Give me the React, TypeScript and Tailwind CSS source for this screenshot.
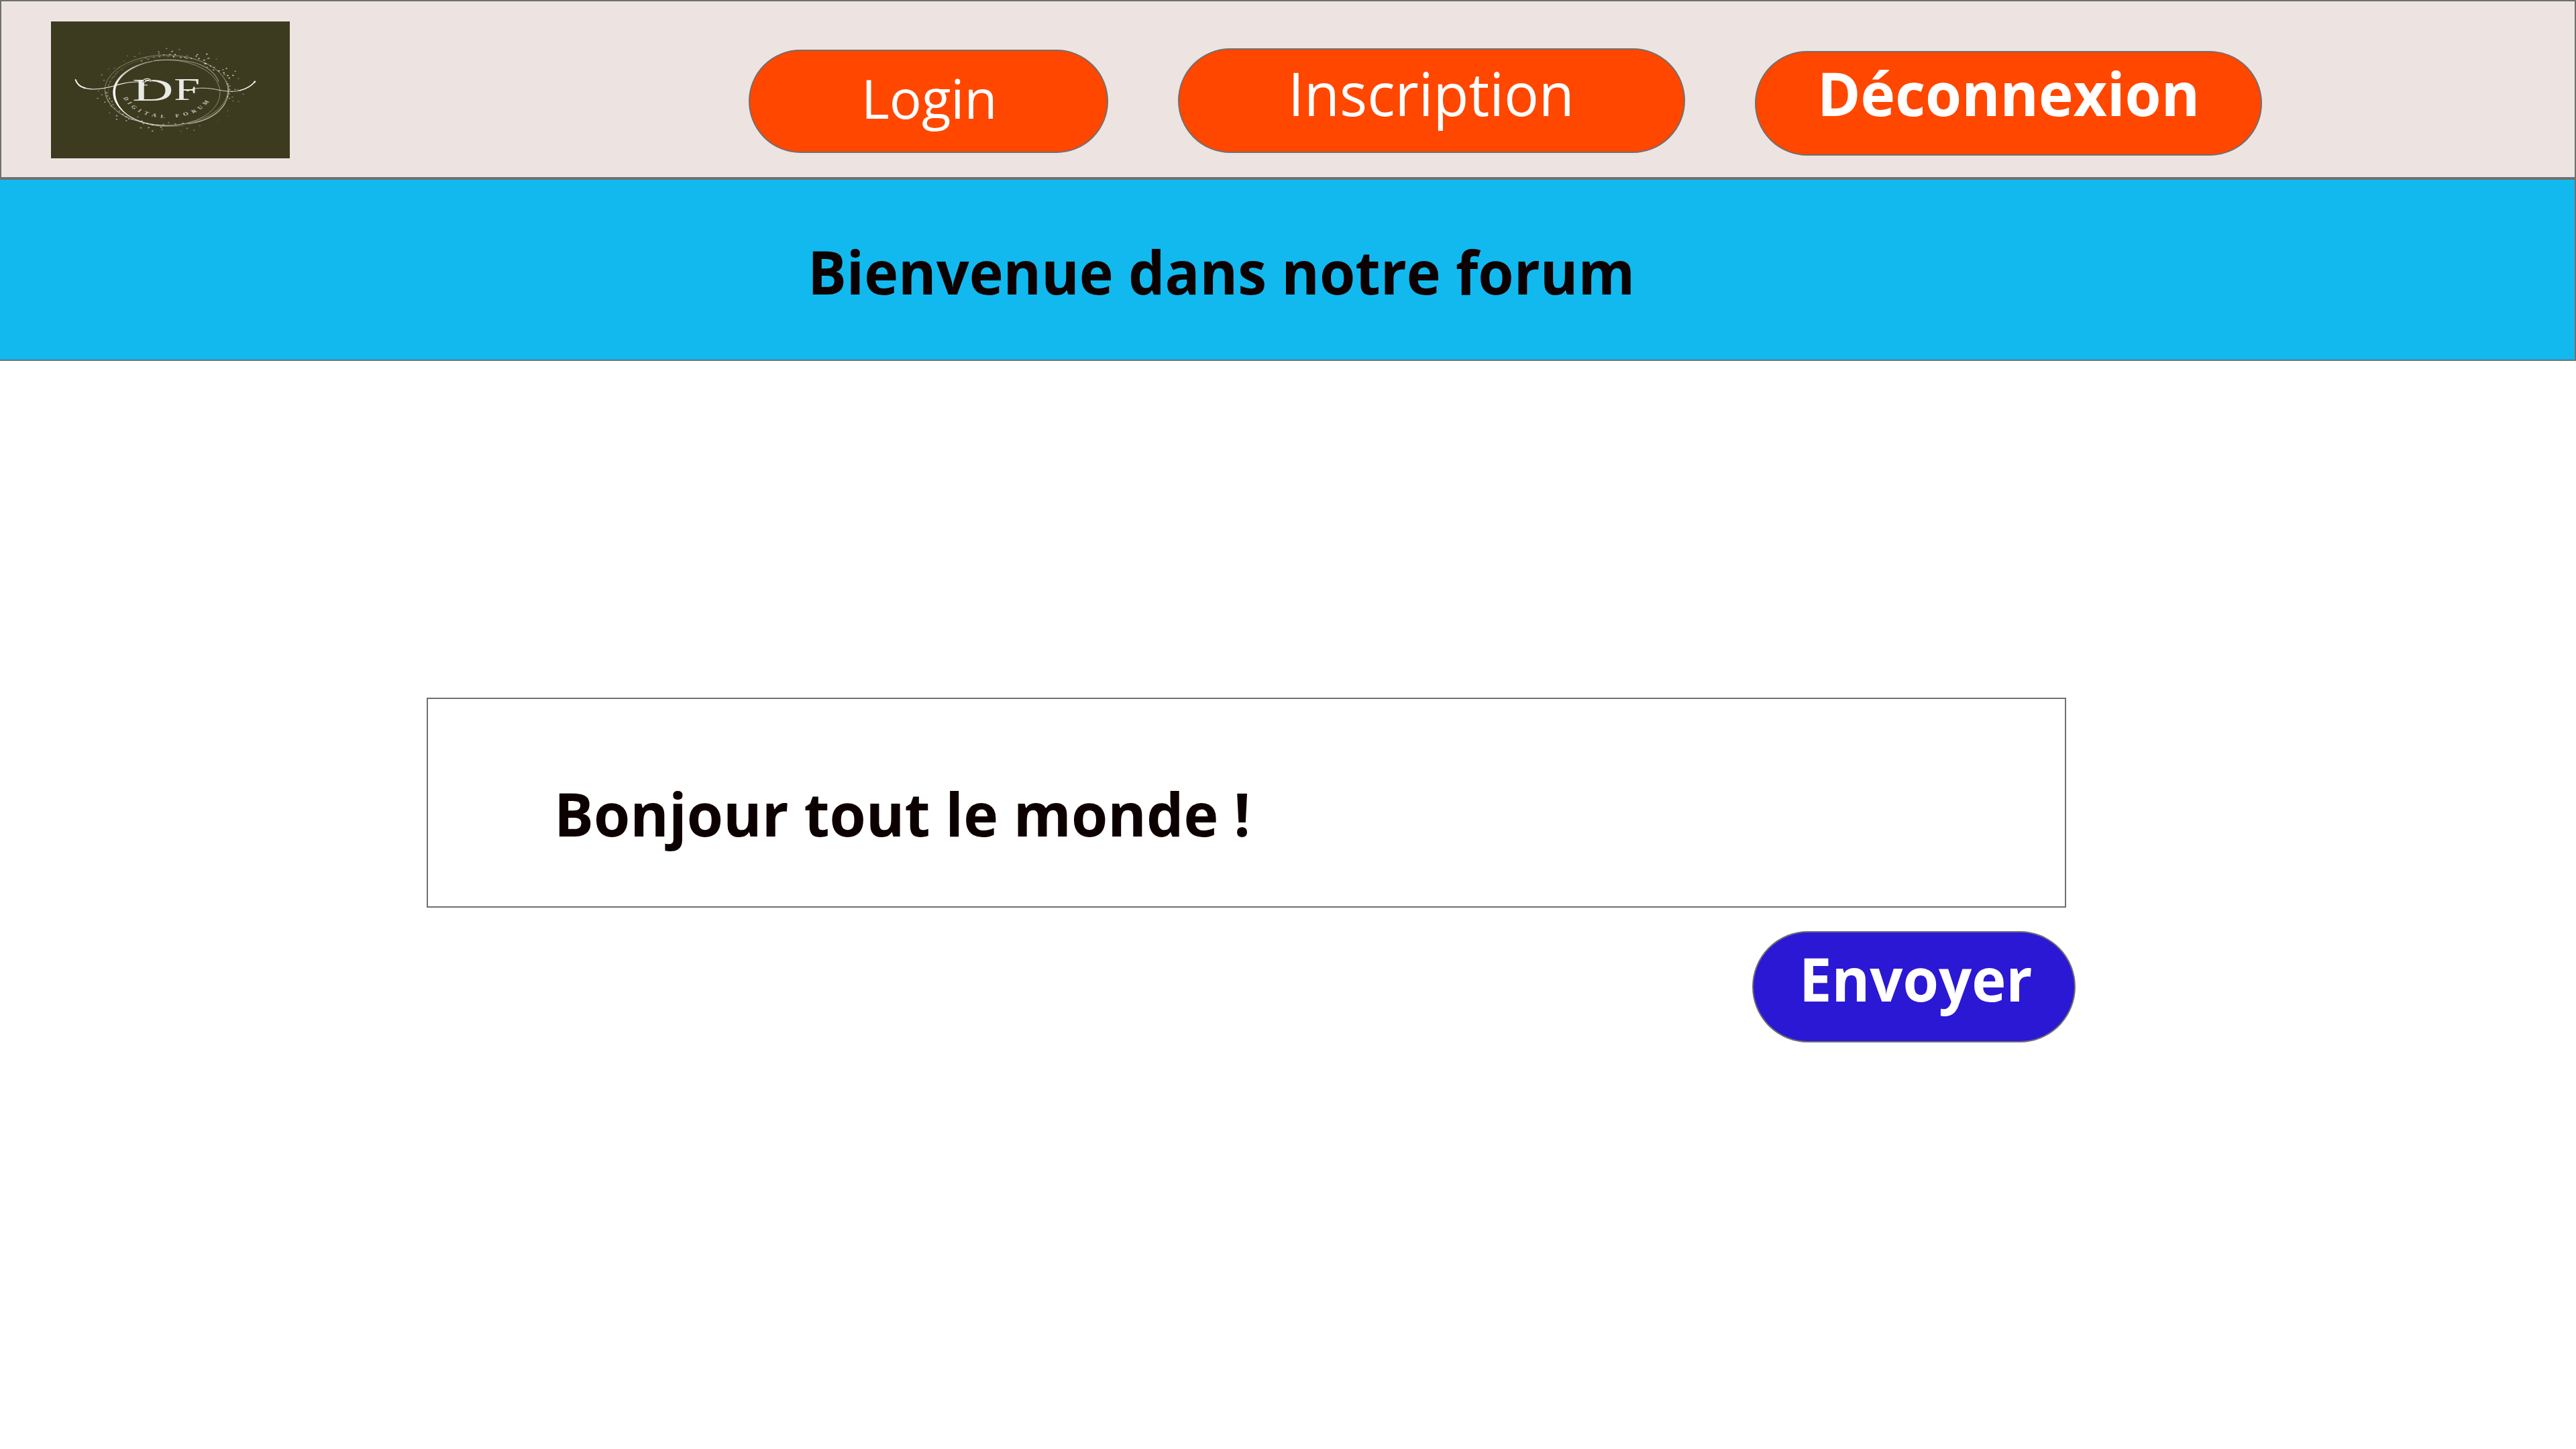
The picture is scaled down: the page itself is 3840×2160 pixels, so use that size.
// [x, y, opacity] of the specks scattered around the rings
const specks: [number, number, number][] = [
  [565, 157, 0.5], [590, 170, 0.8], [622, 161, 0.4], [530, 172, 0.6], [531, 181, 0.5], [553, 185, 0.6],
  [580, 183, 0.8], [603, 184, 0.8], [597, 194, 0.9], [572, 191, 0.4], [533, 194, 0.5], [508, 196, 0.4],
  [483, 205, 0.5], [453, 213, 0.6], [444, 179, 0.25], [422, 193, 0.4], [390, 190, 0.25], [472, 199, 0.35],
  [375, 214, 0.2], [628, 197, 0.7], [647, 197, 0.6], [657, 190, 0.4], [655, 202, 0.5], [675, 201, 0.7],
  [698, 191, 0.8], [703, 184, 0.8], [710, 202, 0.9], [733, 209, 0.9], [745, 182, 0.9], [750, 202, 0.6],
  [755, 200, 0.5], [788, 204, 0.3], [737, 224, 1], [741, 225, 0.9], [762, 235, 0.8], [747, 241, 0.5],
  [778, 241, 0.6], [775, 253, 0.7], [799, 257, 0.9], [817, 252, 0.6], [833, 246, 0.9], [821, 265, 0.9],
  [823, 272, 0.6], [838, 278, 0.9], [845, 289, 0.9], [862, 277, 0.9], [872, 259, 0.6], [887, 292, 0.3],
  [306, 248, 0.2], [275, 275, 0.4], [285, 299, 0.4], [333, 245, 0.25], [352, 241, 0.25], [366, 252, 0.25],
  [337, 271, 0.35], [345, 262, 0.3], [321, 288, 0.3], [330, 283, 0.35], [312, 305, 0.3], [305, 321, 0.4],
  [260, 347, 0.3], [257, 380, 0.5], [276, 364, 0.5], [289, 397, 0.6], [297, 355, 0.7], [300, 369, 0.7],
  [310, 381, 0.7], [304, 391, 0.4], [321, 394, 0.6], [326, 408, 0.5], [317, 415, 0.4], [333, 424, 0.4],
  [310, 445, 0.3], [342, 458, 0.7], [342, 474, 0.7], [354, 437, 0.4], [369, 451, 0.6], [385, 463, 0.8],
  [396, 472, 0.6], [385, 480, 0.7], [437, 463, 0.5], [410, 473, 0.5], [455, 481, 0.6], [461, 493, 0.6],
  [450, 512, 0.6], [485, 511, 0.7], [480, 493, 0.7], [502, 499, 0.8], [502, 526, 0.7], [540, 509, 0.6],
  [545, 519, 0.5], [526, 499, 0.6], [551, 496, 0.5], [574, 489, 0.5], [604, 494, 0.5], [638, 491, 0.6],
  [657, 514, 0.5], [688, 522, 0.4], [713, 502, 0.3], [629, 527, 0.2], [848, 325, 0.5], [847, 340, 0.6],
  [857, 349, 0.5], [871, 340, 0.5], [884, 341, 0.4], [908, 361, 0.4], [845, 360, 0.6], [838, 372, 0.6],
  [846, 380, 0.5], [859, 374, 0.4], [862, 392, 0.3], [887, 394, 0.3], [839, 435, 0.25], [838, 459, 0.15],
  [836, 314, 0.5], [833, 305, 0.4], [796, 484, 0.1],
];

// [letter, x, y, rotation] of the caption that follows the lower rim
const caption: [string, number, number, number][] = [
  ["D", 384, 382, 68], ["I", 400, 401, 56], ["G", 420, 419, 48], ["I", 445, 434, 38], ["T", 475, 446, 27],
  ["A", 510, 455, 15], ["L", 548, 460, 5], ["F", 613, 457, -8], ["O", 650, 449, -18], ["R", 687, 437, -31],
  ["U", 715, 421, -43], ["M", 740, 399, -56],
];

function Logo() {
  return (
    <svg viewBox="48 36 1068 612" className="mt-[30px] h-[204px] w-[356px] shrink-0 bg-[#3c3b1f]" fill="none">
      <defs>
        <linearGradient id="rim" x1="0" y1="0.6" x2="1" y2="0.3">
          <stop offset="0" stopColor="#fff" />
          <stop offset="0.35" stopColor="#fff" stopOpacity="0.6" />
          <stop offset="0.6" stopColor="#fff" stopOpacity="0.25" />
        </linearGradient>
      </defs>
      <g stroke="#dcdbd0">
        <ellipse cx="564" cy="343" rx="275" ry="157" strokeWidth="3" opacity="0.45" />
        <ellipse cx="572" cy="347" rx="268" ry="156" strokeWidth="2" opacity="0.25" />
        <ellipse cx="566" cy="355" rx="238" ry="147" strokeWidth="3" opacity="0.5" />
        <path d="M839 312C858 400 790 475 660 494" strokeWidth="4" opacity="0.6" />
        <path d="M828 400C804 447 752 476 690 489" strokeWidth="3" opacity="0.5" />
        <path d="M508 211C590 202 680 211 722 232C760 249 786 274 798 306" strokeWidth="4" opacity="0.5" />
        <path d="M291 345C296 405 350 460 430 480" strokeWidth="3" opacity="0.4" />
      </g>
      <path
        d="M500 212C396 232 326 286 325 354C325 430 430 508 575 507C600 507 630 506 648 501C600 504 560 503 520 498C400 484 336 420 336 354C336 292 400 238 500 217Z"
        fill="url(#rim)"
      />
      <g fill="#e8e7dc">
        {specks.map(([x, y, o], i) => (
          <ellipse key={i} cx={x} cy={y} rx="4.2" ry="2.4" opacity={o} />
        ))}
      </g>
      <g stroke="#f4f4ef" strokeLinecap="round">
        <path d="M158 297C168 326 194 338 238 339C300 338 330 322 372 313C392 308 412 307 440 306" strokeWidth="3.5" />
        <path d="M158 297C164 315 177 328 200 334" strokeWidth="6" />
        <path d="M676 341C700 330 752 332 800 343C840 350 868 351 892 345" strokeWidth="3" opacity="0.8" />
        <path d="M892 345C922 337 945 323 960 305" strokeWidth="5" />
        <path d="M958 307L960 305" strokeWidth="7" />
      </g>
      <g fill="#e9e9e6" className="font-['Liberation_Serif',serif]">
        <text transform="translate(411 389) scale(1.83 1)" fontSize="140">D</text>
        <text transform="translate(598 387) scale(1.52 1)" fontSize="138">F</text>
        {caption.map(([c, x, y, a], i) => (
          <text key={i} transform={`translate(${x} ${y}) scale(1.45 1) rotate(${a})`} y="7" fontSize="21" fontWeight="700" textAnchor="middle" opacity="0.75">
            {c}
          </text>
        ))}
      </g>
      {/* flourishes where the strands meet the letters */}
      <g strokeLinecap="round">
        <path d="M462 305C464 289 492 288 495 302" stroke="#3c3b1f" strokeWidth="9" />
        <path d="M460 302C464 289 493 288 496 303M458 303C465 306 465 312 461 318M464 320L479 321M468 307C474 300 486 299 494 303" stroke="#f0f0ea" strokeWidth="3.5" />
        <path d="M656 347L678 340" stroke="#f0f0ea" strokeWidth="3.5" />
      </g>
    </svg>
  );
}

export default function App() {
  return (
    <div className="flex h-[2160px] w-[3840px] flex-col overflow-hidden bg-white font-['Open_Sans',sans-serif] whitespace-nowrap">
      <header className="flex h-[266px] shrink-0 items-start border-2 border-[#707070] bg-[#ede4e2] pl-[74px]">
        <Logo />
        <nav className="ml-[684px] flex items-start gap-[104px] text-white">
          <button className="mt-[72px] flex h-[154px] w-[536px] items-start rounded-full border-2 border-[#707070] bg-[#ff4700] pt-[15px] pl-[166px] text-[80px] leading-[109px]">
            Login
          </button>
          <button className="mt-[70px] flex h-[156px] w-[756px] items-start rounded-full border-2 border-[#707070] bg-[#ff4700] pt-[3px] pl-[162px] text-[90px] leading-[122px]">
            <span className="origin-left scale-x-[0.959]">Inscription</span>
          </button>
          <button className="mt-[74px] flex h-[156px] w-[756px] items-start rounded-full border-2 border-[#707070] bg-[#ff4700] pl-[91px] text-[90px] leading-[122px] font-bold">
            <span className="-mt-px origin-left scale-x-[0.97]">Déconnexion</span>
          </button>
        </nav>
      </header>
      <section className="h-[272px] shrink-0 border-y-2 border-r-2 border-[#707070] bg-[#12b9ef] pt-[75px] pl-[1204px]">
        <h1 className="origin-left text-[90px] leading-[122px] font-bold text-[#0d0000]">
          <span className="inline-block origin-left scale-x-[0.957]">Bienvenue dans notre forum</span>
        </h1>
      </section>
      <main className="mt-[502px] ml-[636px] flex w-[2458px] flex-col">
        <div className="h-[313px] w-[2444px] border-2 border-[#707070] bg-white pt-[109px] pl-[188px]">
          <p className="text-[90px] leading-[122px] font-bold text-[#0d0000]">
            <span className="inline-block origin-left scale-x-[0.975]">Bonjour tout le monde !</span>
          </p>
        </div>
        <button className="mt-[35px] flex h-[166px] w-[482px] items-start self-end rounded-full border-2 border-[#707070] bg-[#2b18d4] pt-[7px] pl-[68px] text-[90px] leading-[122px] font-bold text-white">
          <span className="origin-left scale-x-[0.961]">Envoyer</span>
        </button>
      </main>
    </div>
  );
}
